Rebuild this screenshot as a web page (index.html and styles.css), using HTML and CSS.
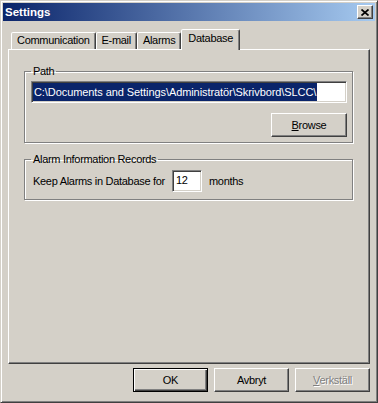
FILE: index.html
```html
<!DOCTYPE html>
<html>
<head>
<meta charset="utf-8">
<link rel="stylesheet" href="styles.css">
</head>
<body>
<div class="window">
  <div class="titlebar">
    <span class="title">Settings</span>
    <button class="close" aria-label="Close"><svg width="8" height="7" viewBox="0 0 8 7"><path d="M0.5 0.5 L7.5 6.5 M7.5 0.5 L0.5 6.5" stroke="#000" stroke-width="1.7" fill="none"/></svg></button>
  </div>
  <div class="tabs">
    <div class="tab">Communication</div>
    <div class="tab">E-mail</div>
    <div class="tab">Alarms</div>
    <div class="tab active">Database</div>
  </div>
  <div class="panel">
    <fieldset class="group path">
      <legend>Path</legend>
      <div class="edit wide"><span class="sel">C:\Documents and Settings\Administratör\Skrivbord\SLCC\</span></div>
      <div class="btnrow"><button class="btn"><u>B</u>rowse</button></div>
    </fieldset>
    <fieldset class="group alarm">
      <legend>Alarm Information Records</legend>
      <div class="row">
        <span class="label">Keep Alarms in Database for</span>
        <div class="edit small">12</div>
        <span class="unit">months</span>
      </div>
    </fieldset>
  </div>
  <div class="buttons">
    <button class="btn default">OK</button>
    <button class="btn">Avbryt</button>
    <button class="btn disabled"><u>V</u>erkställ</button>
  </div>
</div>
</body>
</html>
```

FILE: styles.css
```css
* { box-sizing: border-box; }
html, body { margin: 0; padding: 0; }
body {
  font: 11px "Liberation Sans", Arial, sans-serif;
  background: #d4d0c8;
  color: #000;
}
.window {
  width: 378px;
  height: 403px;
  display: flex;
  flex-direction: column;
  background: #d4d0c8;
  border: 1px solid;
  border-color: #d4d0c8 #404040 #404040 #d4d0c8;
  box-shadow: inset 1px 1px #fff, inset -1px -1px #808080;
  padding: 2px;
}
.titlebar {
  flex: none;
  height: 18px;
  display: flex;
  align-items: center;
  justify-content: space-between;
  padding: 0 2px;
  background: linear-gradient(to right, #0a246a, #a6caf0);
  color: #fff;
  font-weight: bold;
  font-size: 11.5px;
}
.close {
  width: 16px;
  height: 14px;
  padding: 0;
  display: flex;
  align-items: center;
  justify-content: center;
  background: #d4d0c8;
  border: 1px solid;
  border-color: #fff #404040 #404040 #fff;
  box-shadow: inset -1px -1px #808080;
}
.tabs {
  flex: none;
  display: flex;
  align-items: flex-end;
  height: 20px;
  margin: 8px 0 0 8px;
  letter-spacing: -0.3px;
}
.tab {
  height: 17px;
  line-height: 15px;
  padding: 0 5px;
  border: 1px solid;
  border-bottom: none;
  border-color: #fff #404040 transparent #fff;
  box-shadow: inset -1px 0 #808080;
  border-radius: 2px 2px 0 0;
  background: #d4d0c8;
}
.tab.active {
  position: relative;
  z-index: 1;
  height: 21px;
  margin: 0 0 -1px 0;
  padding: 0 6px;
  line-height: 16px;
}
.panel {
  flex: none;
  height: 315px;
  margin: 0 5px;
  border: 1px solid;
  border-color: #fff #404040 #404040 #fff;
  box-shadow: inset -1px -1px #808080;
  padding: 0 16px 0 15px;
  letter-spacing: -0.3px;
}
.group {
  margin: 15px 0 0;
  padding: 3px 5px 5px 6px;
  border: 1px solid #808080;
  box-shadow: inset 1px 1px #fff, 1px 1px #fff;
  min-width: 0;
}
.group legend {
  padding: 0 2px;
  line-height: 13px;
  height: 13px;
}
.group.alarm {
  margin-top: 10px;
  padding: 4px 5px 7px 6px;
}
.edit {
  height: 22px;
  background: #fff;
  border: 1px solid;
  border-color: #808080 #fff #fff #808080;
  box-shadow: inset 1px 1px #404040, inset -1px -1px #d4d0c8;
  padding: 1px;
  display: flex;
  align-items: stretch;
}
.sel {
  background: #0a246a;
  color: #fff;
  line-height: 18px;
  padding: 0 1px;
  white-space: nowrap;
  letter-spacing: -0.08px;
}
.btnrow {
  display: flex;
  justify-content: flex-end;
  margin-top: 10px;
}
.btn {
  width: 76px;
  height: 24px;
  padding: 0;
  font: inherit;
  letter-spacing: -0.3px;
  color: #000;
  background: #d4d0c8;
  border: 1px solid;
  border-color: #fff #404040 #404040 #fff;
  box-shadow: inset -1px -1px #808080;
}
.row {
  display: flex;
  align-items: center;
}
.label {
  flex: none;
  width: 141px;
  padding-left: 2px;
}
.edit.small {
  width: 30px;
  padding: 1px 3px;
  line-height: 16px;
  align-items: flex-start;
}
.unit {
  margin-left: 7px;
}
.buttons {
  flex: none;
  display: flex;
  justify-content: flex-end;
  gap: 6px;
  margin: 4px 5px 0 0;
}
.buttons .btn {
  width: 75px;
}
.btn.default {
  border: 1px solid #000;
  box-shadow: inset 1px 1px #fff, inset -1px -1px #404040, inset -2px -2px #808080;
}
.btn.disabled {
  color: #808080;
  text-shadow: 1px 1px #fff;
}
```
